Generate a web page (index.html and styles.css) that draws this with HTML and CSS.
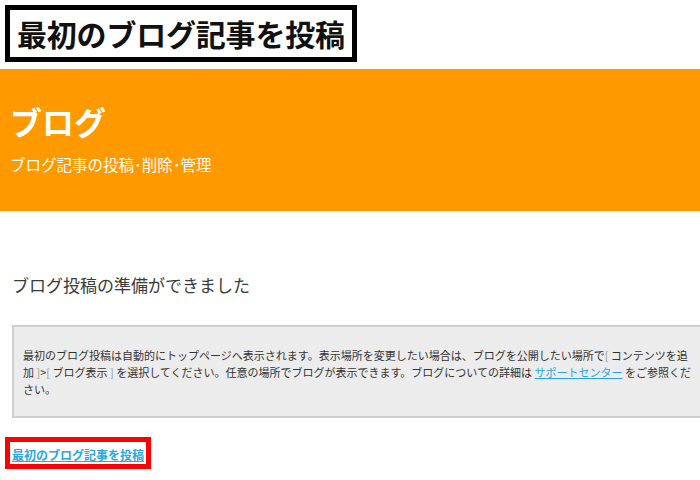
FILE: index.html
```html
<!DOCTYPE html>
<html lang="ja">
<head>
<meta charset="utf-8">
<title>最初のブログ記事を投稿</title>
<link rel="stylesheet" href="styles.css">
</head>
<body>
<div class="page">
  <div class="title-box">最初のブログ記事を投稿</div>
  <header class="hero">
    <h1 class="hero-title">ブログ</h1>
    <p class="hero-sub">ブログ記事の投稿･削除･管理</p>
  </header>
  <h2 class="ready">ブログ投稿の準備ができました</h2>
  <div class="notice">
    <p class="notice-text">最初のブログ投稿は自動的にトップページへ表示されます。表示場所を変更したい場合は、ブログを公開したい場所で<span class="br">[</span> コンテンツを追加 <span class="br">]</span>&gt;<span class="br">[</span> ブログ表示 <span class="br">]</span> を選択してください。任意の場所でブログが表示できます。ブログについての詳細は <a class="support" href="#">サポートセンター</a> をご参照ください。</p>
  </div>
  <div class="cta-box"><a class="cta" href="#">最初のブログ記事を投稿</a></div>
</div>
</body>
</html>
```

FILE: styles.css
```css
html, body {
  margin: 0;
  padding: 0;
  background: #ffffff;
  overflow: hidden;
}
body {
  font-family: "Noto Sans CJK JP", "Noto Sans", sans-serif;
  color: #333333;
}
.page {
  width: 760px;
}
.title-box {
  display: inline-block;
  margin: 5px 0 0 5px;
  border: 5px solid #000000;
  padding: 0 7px;
  height: 47px;
  line-height: 47px;
  font-size: 30px;
  font-weight: bold;
  color: #111111;
  letter-spacing: -0.2px;
}
.hero {
  margin-top: 7px;
  background: #ff9900;
  height: 142px;
  padding: 32px 0 0 10px;
  box-sizing: border-box;
}
.hero-title {
  margin: 0;
  font-size: 32px;
  line-height: 40px;
  font-weight: bold;
  color: #ffffff;
}
.hero-sub {
  margin: 13px 0 0 0;
  font-size: 15.5px;
  line-height: 20px;
  color: #ffffff;
}
.ready {
  margin: 62px 0 0 12px;
  font-size: 17px;
  line-height: 24px;
  font-weight: normal;
  color: #3a3a3a;
}
.notice {
  margin: 28px 0 0 12px;
  background: #ececec;
  border: 2px solid #cfcfcf;
  padding: 20px 10px 18px 9px;
  width: 720px;
}
.notice-text {
  margin: 0;
  width: 674px;
  font-size: 11px;
  line-height: 17px;
  color: #333333;
}
.br {
  color: #999999;
}
.support {
  color: #29a8e0;
  text-decoration: underline;
}
.cta-box {
  display: inline-block;
  margin: 19px 0 0 5px;
  border: 5px solid #ff0000;
  padding: 0 2px;
  height: 22px;
  line-height: 22px;
}
.cta {
  font-size: 12px;
  font-weight: bold;
  color: #29a8e0;
  text-decoration: underline;
  letter-spacing: 0;
}
```
